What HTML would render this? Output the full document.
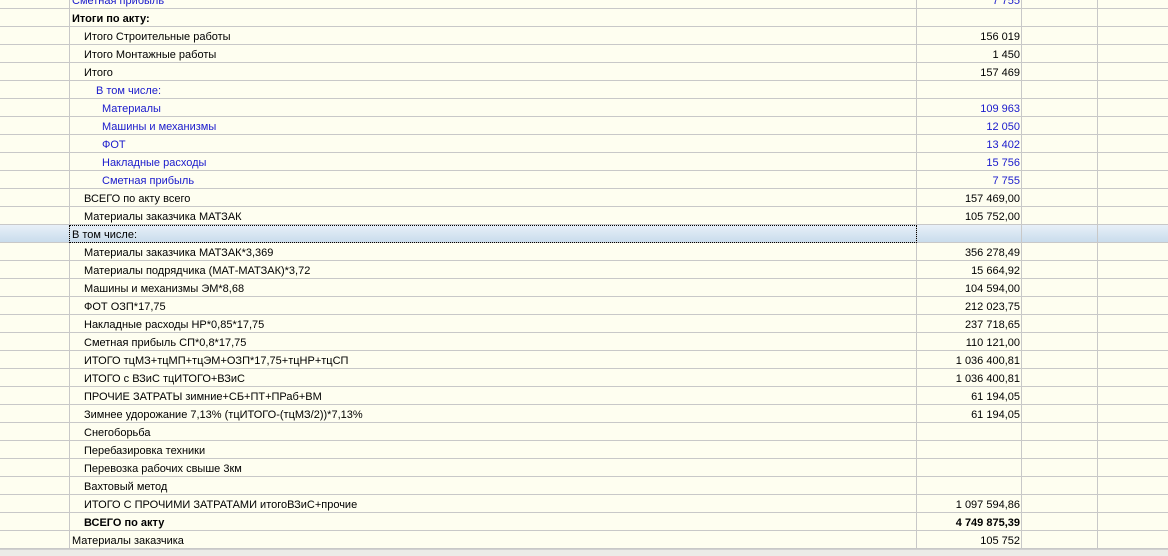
<!DOCTYPE html>
<html><head><meta charset="utf-8"><style>
*{margin:0;padding:0;box-sizing:border-box}
body{width:1168px;height:556px;overflow:hidden;background:#fefef0;font-family:"Liberation Sans","DejaVu Sans",sans-serif;font-size:11px;color:#000;position:relative}
.r{position:absolute;left:0;width:1168px;height:18px;border-bottom:1px solid #c8c8c8}
.c{position:absolute;top:0;height:18px;border-right:1px solid #c8c8c8}
.t{position:absolute;top:4px;white-space:nowrap}
.v{position:absolute;top:4px;right:148px;white-space:nowrap;text-align:right}
.b{color:#1a1acc}
.bold{font-weight:bold}
.sel{background:linear-gradient(#e8f0f8,#c9dcec)}
.foc{position:absolute;left:69px;top:0;width:848px;height:18px;border:1px dotted #000}
.bar{position:absolute;left:0;top:549px;width:1168px;height:7px;background:#ecece8;border-top:1px solid #d0d0d0}
</style></head><body>
<div id="g"></div>
<script>
var rows=[
["Сметная прибыль","7 755",72,"b"],
["Итоги по акту:","",72,"bold"],
["Итого Строительные работы","156 019",84,""],
["Итого Монтажные работы","1 450",84,""],
["Итого","157 469",84,""],
["В том числе:","",96,"b"],
["Материалы","109 963",102,"b"],
["Машины и механизмы","12 050",102,"b"],
["ФОТ","13 402",102,"b"],
["Накладные расходы","15 756",102,"b"],
["Сметная прибыль","7 755",102,"b"],
["ВСЕГО по акту всего","157 469,00",84,""],
["Материалы заказчика МАТЗАК","105 752,00",84,""],
["В том числе:","",72,"sel"],
["Материалы заказчика МАТЗАК*3,369","356 278,49",84,""],
["Материалы подрядчика (МАТ-МАТЗАК)*3,72","15 664,92",84,""],
["Машины и механизмы ЭМ*8,68","104 594,00",84,""],
["ФОТ ОЗП*17,75","212 023,75",84,""],
["Накладные расходы НР*0,85*17,75","237 718,65",84,""],
["Сметная прибыль СП*0,8*17,75","110 121,00",84,""],
["ИТОГО тцМЗ+тцМП+тцЭМ+ОЗП*17,75+тцНР+тцСП","1 036 400,81",84,""],
["ИТОГО с ВЗиС тцИТОГО+ВЗиС","1 036 400,81",84,""],
["ПРОЧИЕ ЗАТРАТЫ зимние+СБ+ПТ+ПРаб+ВМ","61 194,05",84,""],
["Зимнее удорожание 7,13% (тцИТОГО-(тцМЗ/2))*7,13%","61 194,05",84,""],
["Снегоборьба","",84,""],
["Перебазировка техники","",84,""],
["Перевозка рабочих свыше 3км","",84,""],
["Вахтовый метод","",84,""],
["ИТОГО С ПРОЧИМИ ЗАТРАТАМИ итогоВЗиС+прочие","1 097 594,86",84,""],
["ВСЕГО по акту","4 749 875,39",84,"bold"],
["Материалы заказчика","105 752",72,""]
];
var h="";
rows.forEach(function(r,i){
 var top=-9+18*i;
 var cls=r[3];
 h+='<div class="r'+(cls=="sel"?" sel":"")+'" style="top:'+top+'px">'+
 '<div class="c" style="left:0;width:70px"></div>'+
 '<div class="c" style="left:70px;width:847px"></div>'+
 '<div class="c" style="left:917px;width:105px"></div>'+
 '<div class="c" style="left:1022px;width:76px"></div>'+
 (cls=="sel"?'<div class="foc"></div>':'')+
 '<span class="t '+cls+'" style="left:'+r[2]+'px">'+r[0]+'</span>'+
 '<span class="v '+cls+'">'+r[1]+'</span></div>';
});
h+='<div class="bar"></div>';
document.getElementById("g").innerHTML=h;
</script>
</body></html>
